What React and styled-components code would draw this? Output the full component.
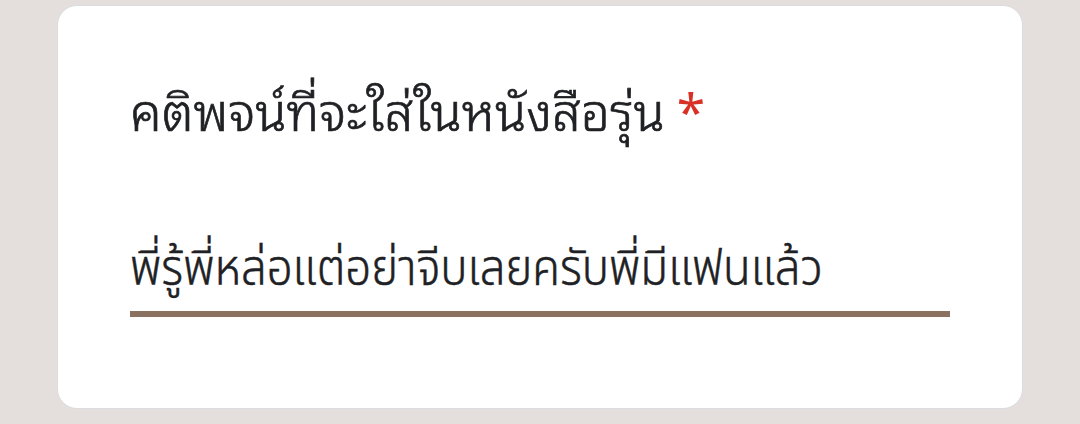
import React from 'react';
import styled, { createGlobalStyle } from 'styled-components';

const GlobalStyle = createGlobalStyle`
    html, body {
        margin: 0;
        padding: 0;
        background: #e4dfdc;
    }
    body {
        width: 1080px;
        height: 424px;
        overflow: hidden;
        font-family: "Noto Sans", sans-serif;
    }
`

const Page = styled.div`
    padding: 5px 57px 0 57px;
`

const Card = styled.section`
    box-sizing: border-box;
    height: 404px;
    background: #ffffff;
    border: 1px solid #dadce0;
    border-radius: 20px;
    padding: 70px 72px 0 72px;
`

const Title = styled.h2`
    margin: 0;
    font-family: "Noto Sans Thai Looped", "Noto Sans", sans-serif;
    font-size: 51.5px;
    font-weight: 300;
    -webkit-text-stroke: 0.7px #202124;
    line-height: 64px;
    color: #202124;
`

const Required = styled.span`
    color: #d93025;
    -webkit-text-stroke: 0;
    margin-left: 12px;
    font-weight: 400;
`

const Answer = styled.div`
    margin-top: 102px;
    font-family: "Noto Sans Thai", "Noto Sans", sans-serif;
    font-size: 50px;
    font-weight: 300;
    -webkit-text-stroke: 0.5px #202124;
    line-height: 56px;
    color: #202124;
    padding-bottom: 13px;
    border-bottom: 6px solid #8b7260;
`

const AnswerText = styled.span`
    display: inline-block;
    white-space: nowrap;
    transform: scaleX(0.91);
    transform-origin: left center;
`

const App = () => {
    return (
        <Page>
            <GlobalStyle />
            <Card>
                <Title>
                    คติพจน์ที่จะใส่ในหนังสือรุ่น
                    <Required>*</Required>
                </Title>
                <Answer>
                    <AnswerText>พี่รู้พี่หล่อแต่อย่าจีบเลยครับพี่มีแฟนแล้ว</AnswerText>
                </Answer>
            </Card>
        </Page>
    )
}

export default App;
